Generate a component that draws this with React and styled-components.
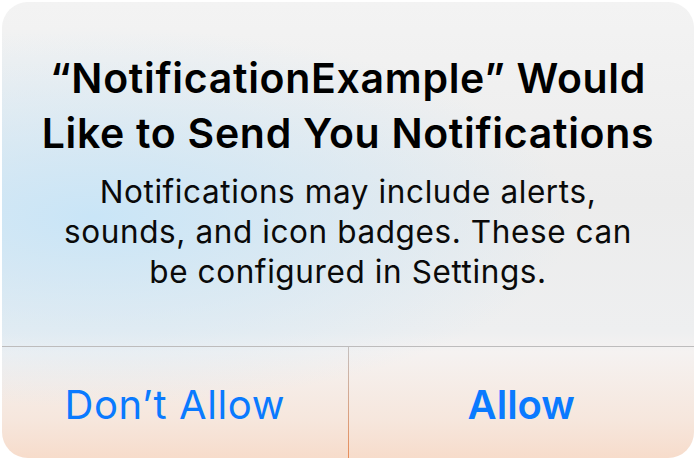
import styled, { createGlobalStyle } from "styled-components";

const GlobalStyle = createGlobalStyle`
  body {
    margin: 0;
    background: #ffffff;
    font-family: Inter, "Noto Sans", "Liberation Sans", sans-serif;
  }
`;

const Alert = styled.div`
  margin: 2px 0 0 2px;
  width: 692px;
  height: 456px;
  border-radius: 26px;
  overflow: hidden;
  display: flex;
  flex-direction: column;
  background:
    radial-gradient(ellipse 480px 190px at 90px 215px, rgba(201, 229, 247, 1), rgba(201, 229, 247, 0) 100%),
    linear-gradient(to bottom, #f3f3f3 0px, #ececec 200px, #eeeff0 330px, #f5f2f1 350px, #f6e6dc 420px, #f7dccb 456px);
`;

const Body = styled.div`
  flex: 1;
  display: flex;
  flex-direction: column;
  align-items: center;
  padding: 49px 10px 0;
  text-align: center;
`;

const Title = styled.h1`
  margin: 0;
  font-size: 41px;
  line-height: 55px;
  font-weight: 600;
  color: #000;
  letter-spacing: 0.7px;
`;

const Message = styled.p`
  margin: 11px 0 0;
  font-size: 31.5px;
  line-height: 40px;
  font-weight: 400;
  color: #0a0a0a;
  letter-spacing: 0.6px;
`;

const Actions = styled.div`
  display: flex;
  height: 111px;
  border-top: 1px solid #bdbcbc;
`;

const Action = styled.button`
  flex: 1;
  border: none;
  background: transparent;
  padding: 3px 0 0;
  font-family: inherit;
  font-size: 40px;
  letter-spacing: ${(p) => (p.$primary ? "0px" : "0.6px")};
  font-weight: ${(p) => (p.$primary ? 600 : 400)};
  color: #0a7aff;
  border-left: ${(p) => (p.$divider ? "1px solid transparent" : "none")};
  border-image: ${(p) =>
    p.$divider ? "linear-gradient(to bottom, #c4c0bf, #e88c58) 1" : "none"};
`;

export default function App() {
  return (
    <>
      <GlobalStyle />
      <Alert>
        <Body>
          <Title>
            “NotificationExample” Would
            <br />
            Like to Send You Notifications
          </Title>
          <Message>
            Notifications may include alerts,
            <br />
            sounds, and icon badges. These can
            <br />
            be configured in Settings.
          </Message>
        </Body>
        <Actions>
          <Action>Don’t Allow</Action>
          <Action $primary $divider>
            Allow
          </Action>
        </Actions>
      </Alert>
    </>
  );
}
